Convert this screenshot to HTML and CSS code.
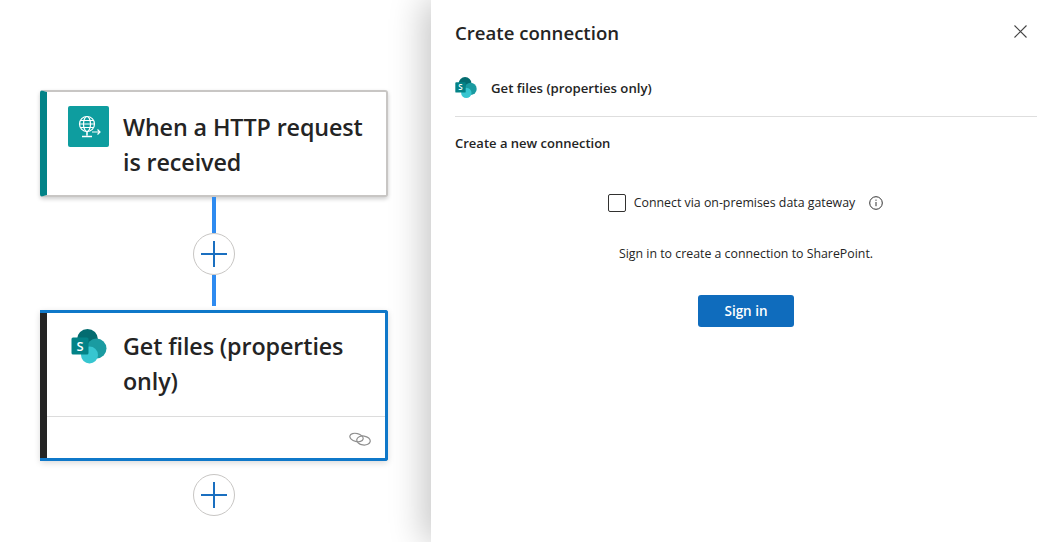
FILE: index.html
```html
<!DOCTYPE html>
<html lang="en">
<head>
  <meta charset="UTF-8" />
  <title>Create connection</title>
  <link rel="stylesheet" href="styles.css">
</head>
<body>

  <main class="canvas">
    <section class="card card-trigger">
      <div class="card-head">
        <span class="trigger-icon">
          <svg width="26" height="26" viewBox="0 0 26 26" fill="none" stroke="#fff" stroke-width="1.2">
            <circle cx="11" cy="10" r="7.5"/>
            <ellipse cx="11" cy="10" rx="3.5" ry="7.5"/>
            <path d="M3.5 10h15M4.500 6.500h13M4.500 13.500h13"/>
            <path d="M11 17.500v4M6 22.500h10" stroke-width="1.600"/>
            <path d="M16 18h8M21.500 15.500l2.500 2.500-2.500 2.500"/>
          </svg>
        </span>
        <h2 class="card-title">When a HTTP request is received</h2>
      </div>
    </section>

    <div class="line line-top"></div>
    <button class="add-step"><svg width="26" height="26" viewBox="0 0 26 26"><path d="M13 0v26M0 13h26" stroke="#1a6fc0" stroke-width="2"/></svg></button>
    <div class="line line-bottom"></div>

    <section class="card card-action">
      <div class="card-head">
        <span class="sp-icon">
          <svg width="36" height="36" viewBox="0 0 36 36">
            <circle cx="16.500" cy="10.500" r="10.500" fill="#036c70"/>
            <circle cx="25.500" cy="19.500" r="10" fill="#1a9ba1"/>
            <circle cx="18.500" cy="26" r="8.500" fill="#37c6d0"/>
            <rect x="0.500" y="8.500" width="17" height="17" rx="1.500" fill="#038387"/>
            <text x="9" y="22" class="sp-letter">S</text>
          </svg>
        </span>
        <h2 class="card-title">Get files (properties only)</h2>
      </div>
      <div class="card-foot">
        <svg width="22" height="14" viewBox="0 0 22 14" fill="none" stroke="#8f8f8f" stroke-width="1.200">
          <ellipse cx="7.500" cy="5.500" rx="6.800" ry="4" transform="rotate(14 7.500 5.500)"/>
          <ellipse cx="14.500" cy="8.500" rx="6.800" ry="4.500" transform="rotate(8 14.500 8.500)"/>
        </svg>
      </div>
    </section>

    <button class="add-step add-last"><svg width="26" height="26" viewBox="0 0 26 26"><path d="M13 0v26M0 13h26" stroke="#1a6fc0" stroke-width="2"/></svg></button>
  </main>

  <aside class="panel">
    <header class="panel-head">
      <h1>Create connection</h1>
      <svg class="close" width="13" height="13" viewBox="0 0 13 13"><path d="M.5.5l12 12M12.500.5l-12 12" stroke="#444" stroke-width="1.100"/></svg>
    </header>

    <div class="op-row">
      <svg class="op-icon" width="22" height="22" viewBox="0 0 36 36">
        <circle cx="16.500" cy="10.500" r="10.500" fill="#036c70"/>
        <circle cx="25.500" cy="19.500" r="10" fill="#1a9ba1"/>
        <circle cx="18.500" cy="26" r="8.500" fill="#37c6d0"/>
        <rect x="0.500" y="8.500" width="17" height="17" rx="1.500" fill="#038387"/>
        <text x="9" y="22" class="sp-letter">S</text>
      </svg>
      <span class="op-name">Get files (properties only)</span>
    </div>

    <h3 class="new-conn">Create a new connection</h3>

    <div class="center">
      <label class="gateway">
        <span class="checkbox"></span>
        <span>Connect via on-premises data gateway</span>
        <svg class="info" width="14" height="14" viewBox="0 0 14 14" fill="none" stroke="#333">
          <circle cx="7" cy="7" r="6.300"/>
          <path d="M7 6v4.200M7 3.600v1.200"/>
        </svg>
      </label>
      <p class="sign-text">Sign in to create a connection to SharePoint.</p>
      <button class="sign-in">Sign in</button>
    </div>
  </aside>

</body>
</html>
```

FILE: styles.css
```css
* {
  box-sizing: border-box;
}
body {
  font-family: "Open Sans", "Noto Sans", sans-serif;
  margin: 0;
  width: 1040px;
  height: 542px;
  overflow: hidden;
  display: flex;
  background-color: #fff;
  color: #242424;
}
.canvas {
  width: 431px;
  padding: 90px 0 0 40px;
  display: flex;
  flex-direction: column;
  align-items: flex-start;
}
.card {
  width: 348px;
  background-color: #fff;
  border-radius: 3px;
}
.card-trigger {
  height: 107px;
  border: 2px solid #c8c6c4;
  border-left: 7px solid #038387;
  box-shadow: 0 2px 4px rgba(0,0,0,0.2);
}
.card-action {
  height: 151px;
  border: 3px solid #0f78c9;
  border-left: 7px solid #242424;
  display: flex;
  flex-direction: column;
  box-shadow: 0 2px 6px rgba(0,0,0,0.15);
  position: relative;
}
/* blue edge runs over the dark bar, top and bottom */
.card-action::before, .card-action::after {
  content: "";
  position: absolute;
  left: -7px;
  right: 0;
  height: 3px;
  background-color: #0f78c9;
}
.card-action::before {
  top: -3px;
}
.card-action::after {
  bottom: -3px;
}
.card-head {
  display: flex;
  gap: 14px;
  padding: 14px 20px 0 21px;
}
.card-action .card-head {
  height: 104px;
  border-bottom: 1px solid #dcdcdc;
  padding-top: 13px;
}
.card-title {
  margin: 4px 0 0;
  font-size: 23.300px;
  font-weight: 600;
  line-height: 35px;
  letter-spacing: -0.100px;
}
.card-action .card-title {
  margin-top: 3px;
}
.trigger-icon {
  flex: none;
  width: 41px;
  height: 41px;
  border-radius: 2px;
  background-color: #0e9d9f;
  display: flex;
  align-items: center;
  justify-content: center;
}
.sp-icon {
  flex: none;
  width: 41px;
  height: 41px;
  display: flex;
  align-items: center;
  justify-content: center;
}
.sp-letter {
  font-family: "Open Sans", sans-serif;
  font-size: 13px;
  font-weight: 600;
  fill: #fff;
  text-anchor: middle;
}
.card-foot {
  flex: 1;
  display: flex;
  justify-content: flex-end;
  align-items: center;
  padding: 2px 14px 0 0;
}
.line {
  width: 4px;
  background-color: #2e8bf0;
  margin-left: 172px;
}
.line-top {
  height: 36px;
}
.line-bottom {
  height: 31px;
  margin-bottom: 4px;
}
.add-step {
  width: 42px;
  height: 42px;
  margin-left: 153px;
  padding: 0;
  background-color: #fff;
  border: 1.500px solid #c8c6c4;
  border-radius: 50%;
  display: flex;
  align-items: center;
  justify-content: center;
}
.add-last {
  margin-top: 13px;
}
.panel {
  width: 609px;
  height: 542px;
  padding: 0 3px 0 24px;
  background-color: #fff;
  box-shadow: -8px 0 32px rgba(0,0,0,0.22);
}
.panel-head {
  height: 66px;
  padding: 19px 10px 0 0;
  display: flex;
  justify-content: space-between;
}
.panel-head h1 {
  margin: 0;
  font-size: 18.600px;
  font-weight: 600;
  line-height: 28px;
}
.close {
  margin-top: 6px;
}
.op-row {
  height: 51px;
  display: flex;
  align-items: flex-start;
  gap: 14px;
  padding-top: 10px;
  font-size: 13.200px;
  font-weight: 600;
  line-height: 22px;
  border-bottom: 1px solid #dedede;
}
.op-icon {
  margin-top: 1px;
}
.op-name {
  margin-top: 1px;
}
.new-conn {
  margin: 16px 0 0;
  font-size: 13px;
  font-weight: 600;
  line-height: 20px;
}
.center {
  margin-top: 40px;
  display: flex;
  flex-direction: column;
  align-items: center;
  font-size: 12.350px;
}
.gateway {
  display: flex;
  align-items: center;
  line-height: 20px;
  padding-right: 1px;
}
.checkbox {
  width: 18px;
  height: 18px;
  border: 1px solid #323130;
  border-radius: 2px;
  margin-right: 8px;
}
.info {
  margin-left: 14px;
}
.sign-text {
  margin: 31px 0 0;
  line-height: 20px;
}
.sign-in {
  margin-top: 31px;
  width: 96px;
  height: 32px;
  border: none;
  border-radius: 3px;
  background-color: #0f6cbd;
  color: #fff;
  font-family: inherit;
  font-size: 13.500px;
  font-weight: 600;
}
```
